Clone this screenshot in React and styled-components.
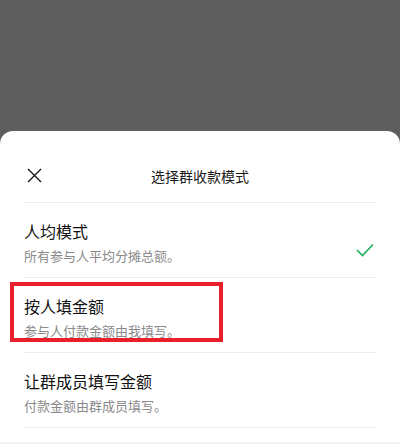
import React from "react";
import styled, { createGlobalStyle } from "styled-components";

const Global = createGlobalStyle`
  html, body { margin: 0; padding: 0; }
  body {
    width: 400px; height: 444px; overflow: hidden;
    background: #5e5e5e;
    font-family: "Noto Sans CJK SC", "Noto Sans", sans-serif;
  }
`;

const Page = styled.div`
  display: flex;
  flex-direction: column;
  height: 444px;
`;

const Backdrop = styled.div`
  height: 131px;
  flex: none;
`;

const Sheet = styled.div`
  flex: 1;
  background: #fff;
  border-radius: 13px 13px 0 0;
  display: flex;
  flex-direction: column;
`;

const Header = styled.div`
  display: grid;
  grid-template-columns: 40px 1fr 40px;
  align-items: center;
  height: 72px;
  box-sizing: border-box;
  padding-top: 17px;
  margin: 0 24px;
  border-bottom: 1px solid #ededed;
`;

const CloseBtn = styled.div`
  display: flex;
  align-items: center;
  padding-left: 3px;
  height: 16px;
`;

const Title = styled.div`
  text-align: center;
  font-size: 14px;
  color: #1a1a1a;
  line-height: 20px;
  padding-top: 1px;
`;

const List = styled.div`
  margin: 0 24px;
`;

const Row = styled.div`
  position: relative;
  height: 75px;
  box-sizing: border-box;
  padding-top: 17px;
  border-bottom: 1px solid #ededed;
  display: flex;
  align-items: flex-start;
  justify-content: space-between;
`;

const Texts = styled.div`
  display: flex;
  flex-direction: column;
  gap: 5px;
`;

const RowTitle = styled.div`
  font-size: 16px;
  line-height: 22px;
  color: #111;
`;

const RowSub = styled.div`
  font-size: 13px;
  line-height: 18px;
  color: #8a8a8a;
`;

const Check = styled.div`
  margin-top: 18px;
  margin-right: 2px;
`;

const Highlight = styled.div`
  position: absolute;
  left: -14px;
  top: 4px;
  width: 213px;
  height: 60px;
  box-sizing: border-box;
  border: 4px solid #e8202a;
  pointer-events: none;
`;

const Footer = styled.div`
  margin-top: auto;
  height: 2px;
  background: #f4f4f4;
`;

const items = [
  { title: "人均模式", sub: "所有参与人平均分摊总额。", checked: true },
  { title: "按人填金额", sub: "参与人付款金额由我填写。", highlight: true },
  { title: "让群成员填写金额", sub: "付款金额由群成员填写。" },
];

export default function App() {
  return (
    <Page>
      <Global />
      <Backdrop />
      <Sheet>
        <Header>
          <CloseBtn>
            <svg width="15" height="15" viewBox="0 0 15 15">
              <path d="M1 1 L14 14 M14 1 L1 14" stroke="#1a1a1a" strokeWidth="1.4" fill="none" />
            </svg>
          </CloseBtn>
          <Title>选择群收款模式</Title>
          <div />
        </Header>
        <List>
          {items.map((it) => (
            <Row key={it.title}>
              <Texts>
                <RowTitle>{it.title}</RowTitle>
                <RowSub>{it.sub}</RowSub>
              </Texts>
              {it.checked && (
                <Check>
                  <svg width="18" height="14" viewBox="0 0 18 14">
                    <path d="M1 7 L6.5 12.5 L17 1.5" stroke="#1aad5e" strokeWidth="1.6" fill="none" />
                  </svg>
                </Check>
              )}
              {it.highlight && <Highlight />}
            </Row>
          ))}
        </List>
        <Footer />
      </Sheet>
    </Page>
  );
}
